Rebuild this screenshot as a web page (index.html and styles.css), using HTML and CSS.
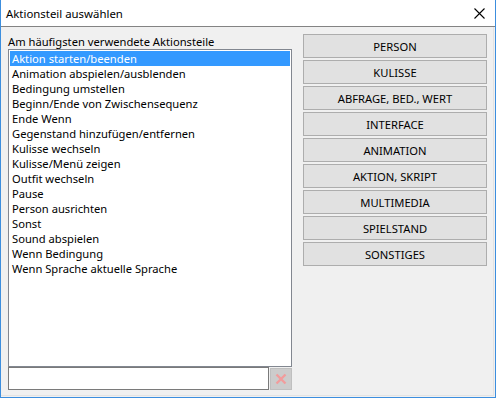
FILE: index.html
```html
<!DOCTYPE html>
<html lang="de">
<head>
    <meta charset="UTF-8">
    <title>Aktionsteil auswählen</title>
    <link rel="stylesheet" href="styles.css">
</head>
<body>
    <div class="window">
        <div class="titlebar">
            <span class="title">Aktionsteil auswählen</span>
            <svg class="close" width="11" height="11" viewBox="0 0 11 11">
                <path d="M0.5 0.5 L10.5 10.5 M10.5 0.5 L0.5 10.5" stroke="#000" stroke-width="1.1" fill="none"/>
            </svg>
        </div>
        <div class="client">
            <div class="left-col">
                <div class="label">Am häufigsten verwendete Aktionsteile</div>
                <ul class="list">
                    <li class="selected">Aktion starten/beenden</li>
                    <li>Animation abspielen/ausblenden</li>
                    <li>Bedingung umstellen</li>
                    <li>Beginn/Ende von Zwischensequenz</li>
                    <li>Ende Wenn</li>
                    <li>Gegenstand hinzufügen/entfernen</li>
                    <li>Kulisse wechseln</li>
                    <li>Kulisse/Menü zeigen</li>
                    <li>Outfit wechseln</li>
                    <li>Pause</li>
                    <li>Person ausrichten</li>
                    <li>Sonst</li>
                    <li>Sound abspielen</li>
                    <li>Wenn Bedingung</li>
                    <li>Wenn Sprache aktuelle Sprache</li>
                </ul>
                <div class="search-row">
                    <input type="text" class="search">
                    <div class="clear-btn">
                        <svg width="12" height="12" viewBox="0 0 12 12">
                            <path d="M1.5 1.5 L10.5 10.5 M10.5 1.5 L1.5 10.5" stroke="#f29c9c" stroke-width="2.4" fill="none"/>
                        </svg>
                    </div>
                </div>
            </div>
            <div class="right-col">
                <button>PERSON</button>
                <button>KULISSE</button>
                <button>ABFRAGE, BED., WERT</button>
                <button>INTERFACE</button>
                <button>ANIMATION</button>
                <button>AKTION, SKRIPT</button>
                <button>MULTIMEDIA</button>
                <button>SPIELSTAND</button>
                <button>SONSTIGES</button>
            </div>
        </div>
    </div>
</body>
</html>
```

FILE: styles.css
```css
body {
    margin: 0;
    padding: 0;
    font-family: "Noto Sans", "Open Sans", sans-serif;
    font-size: 11.2px;
    color: #000;
    background-color: #fff;
}

.window {
    width: 494px;
    height: 397px;
    border: 1px solid #3c8ede;
    border-top: none;
    background-color: #f0f0f0;
    display: flex;
    flex-direction: column;
}

.titlebar {
    height: 26px;
    background-color: #fff;
    border-bottom: 1px solid #838383;
    display: flex;
    align-items: center;
    justify-content: space-between;
    padding: 0 10px 0 5px;
}

.title {
    font-size: 11.4px;
    line-height: 15px;
}

.close {
    display: block;
    margin-top: 1px;
}

.client {
    flex: 1;
    display: flex;
    padding: 0 0 0 7px;
    border-right: 1px solid #e3e3e3;
    border-bottom: 1px solid #e3e3e3;
    margin-right: 1px;
    margin-bottom: 1px;
}

.left-col {
    width: 284px;
    display: flex;
    flex-direction: column;
}

.label {
    padding-top: 7px;
    height: 15px;
    line-height: 15px;
    white-space: nowrap;
}

.list {
    list-style: none;
    margin: 0;
    padding: 1px;
    height: 314px;
    border: 1px solid #828790;
    background-color: #fff;
}

.list li {
    height: 15px;
    line-height: 15px;
    padding-left: 2px;
    white-space: nowrap;
}

.list li.selected {
    background-color: #3399ff;
    color: #fff;
}

.search-row {
    display: flex;
    align-items: flex-start;
}

.search {
    width: 259px;
    height: 21px;
    box-sizing: content-box;
    margin: 0;
    padding: 0;
    border: 1px solid #7a7a7a;
    background-color: #fff;
}

.clear-btn {
    width: 20px;
    height: 20px;
    margin: 1px 0 0 1px;
    border: 1px solid #bfbfbf;
    background-color: #cccccc;
    display: flex;
    align-items: center;
    justify-content: center;
}

.right-col {
    width: 184px;
    margin-left: 11px;
    padding-top: 7px;
    display: flex;
    flex-direction: column;
    gap: 2px;
}

.right-col button {
    height: 24px;
    margin: 0;
    padding: 0;
    border: 1px solid #adadad;
    background-color: #e1e1e1;
    font-family: "Noto Sans", "Open Sans", sans-serif;
    font-size: 11.2px;
    color: #000;
}
```
